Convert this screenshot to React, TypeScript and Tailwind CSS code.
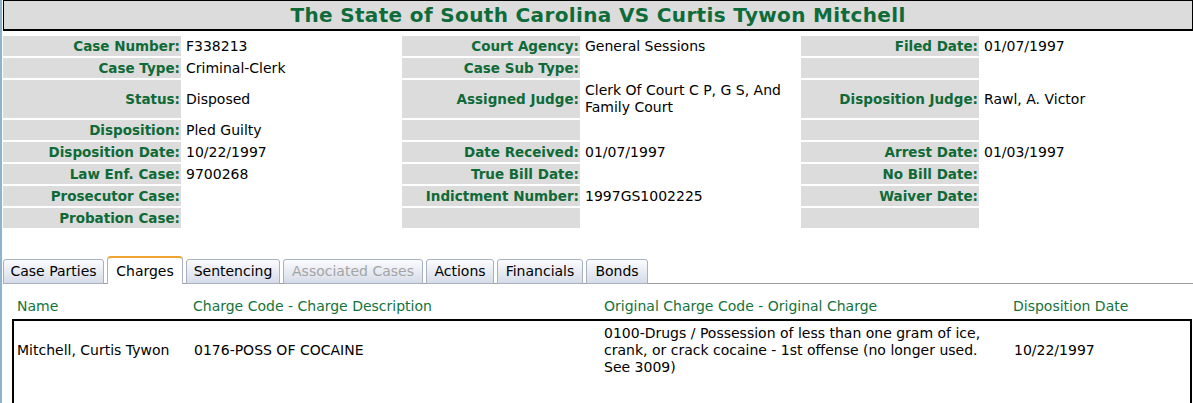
import React from "react";

type Cell = { label?: string; value?: React.ReactNode };

const rows: { h: string; cells: Cell[] }[] = [
  {
    h: "h-[20px]",
    cells: [
      { label: "Case Number:", value: "F338213" },
      { label: "Court Agency:", value: "General Sessions" },
      { label: "Filed Date:", value: "01/07/1997" },
    ],
  },
  {
    h: "h-[20px]",
    cells: [
      { label: "Case Type:", value: "Criminal-Clerk" },
      { label: "Case Sub Type:", value: "" },
      { label: "", value: "" },
    ],
  },
  {
    h: "h-[38px]",
    cells: [
      { label: "Status:", value: "Disposed" },
      {
        label: "Assigned Judge:",
        value: (
          <>
            Clerk Of Court C P, G S, And
            <br />
            Family Court
          </>
        ),
      },
      { label: "Disposition Judge:", value: "Rawl, A. Victor" },
    ],
  },
  {
    h: "h-[20px]",
    cells: [
      { label: "Disposition:", value: "Pled Guilty" },
      { label: "", value: "" },
      { label: "", value: "" },
    ],
  },
  {
    h: "h-[20px]",
    cells: [
      { label: "Disposition Date:", value: "10/22/1997" },
      { label: "Date Received:", value: "01/07/1997" },
      { label: "Arrest Date:", value: "01/03/1997" },
    ],
  },
  {
    h: "h-[20px]",
    cells: [
      { label: "Law Enf. Case:", value: "9700268" },
      { label: "True Bill Date:", value: "" },
      { label: "No Bill Date:", value: "" },
    ],
  },
  {
    h: "h-[20px]",
    cells: [
      { label: "Prosecutor Case:", value: "" },
      { label: "Indictment Number:", value: "1997GS1002225" },
      { label: "Waiver Date:", value: "" },
    ],
  },
  {
    h: "h-[20px]",
    cells: [
      { label: "Probation Case:", value: "" },
      { label: "", value: "" },
      { label: "", value: "" },
    ],
  },
];

const tabs = [
  { name: "Case Parties", w: "w-[101px]" },
  { name: "Charges", w: "w-[76px]", active: true },
  { name: "Sentencing", w: "w-[94px]" },
  { name: "Associated Cases", w: "w-[140px]", disabled: true },
  { name: "Actions", w: "w-[68px]" },
  { name: "Financials", w: "w-[86px]" },
  { name: "Bonds", w: "w-[62px]" },
];

export default function App() {
  return (
    <div className="min-h-[403px] bg-white border-l-2 border-[#8cb4cf] pl-px font-['DejaVu_Sans',sans-serif] text-[14px] text-black">
      <div className="h-[31px] border border-b-2 border-black bg-[#dcdcdc] flex items-center justify-center">
        <h1 className="text-[20px] font-bold tracking-[0.35px] text-[#0e6b3a] leading-none">
          The State of South Carolina VS Curtis Tywon Mitchell
        </h1>
      </div>

      <div className="mt-[5px] grid grid-cols-[178px_217px_178px_217px_178px_1fr] gap-[2px]">
        {rows.map((r, ri) =>
          r.cells.map((c, ci) => (
            <React.Fragment key={`${ri}-${ci}`}>
              <div
                className={`${r.h} bg-[#dcdcdc] flex items-center justify-end pr-px text-[13.5px] font-bold text-[#0f6a37] whitespace-nowrap`}
              >
                {c.label}
              </div>
              <div className={`${r.h} flex items-center pl-[3px] leading-[17px] whitespace-nowrap`}>
                <div>{c.value}</div>
              </div>
            </React.Fragment>
          ))
        )}
      </div>

      <div className="mt-[28px] h-[28px] flex items-end gap-[3px] border-b border-[#9c9c9c]">
        {tabs.map((t) =>
          t.active ? (
            <div
              key={t.name}
              className={`${t.w} h-[28px] -mb-px bg-white border border-[#aab2c2] border-t-2 border-t-[#efa432] border-b-0 rounded-t-[4px] flex items-center justify-center`}
            >
              {t.name}
            </div>
          ) : (
            <div
              key={t.name}
              className={`${t.w} h-[25px] -mb-px border border-[#a9b0c0] rounded-t-[3px] bg-gradient-to-b from-[#fbfcfe] to-[#d6dbe8] flex items-center justify-center ${
                t.disabled ? "text-[#a4a4a4]" : "text-black"
              }`}
            >
              {t.name}
            </div>
          )
        )}
      </div>

      <div className="ml-[9px] mt-[14px] grid grid-cols-[176px_411px_409px_1fr] h-[17px] leading-[17px] text-[#14733a]">
        <div className="pl-[5px]">Name</div>
        <div className="pl-[5px]">Charge Code - Charge Description</div>
        <div className="pl-[5px]">Original Charge Code - Original Charge</div>
        <div className="pl-[5px]">Disposition Date</div>
      </div>

      <div className="ml-[9px] mr-px mt-[4px] min-h-[100px] border-2 border-black">
        <div className="grid grid-cols-[174px_411px_409px_1fr] items-center pt-[4px] leading-[17px]">
          <div className="pl-[3px] whitespace-nowrap">Mitchell, Curtis Tywon</div>
          <div className="pl-[6px]">0176-POSS OF COCAINE</div>
          <div className="pl-[5px]">
            0100-Drugs / Possession of less than one gram of ice,
            <br />
            crank, or crack cocaine - 1st offense (no longer used.
            <br />
            See 3009)
          </div>
          <div className="pl-[6px]">10/22/1997</div>
        </div>
      </div>
    </div>
  );
}
